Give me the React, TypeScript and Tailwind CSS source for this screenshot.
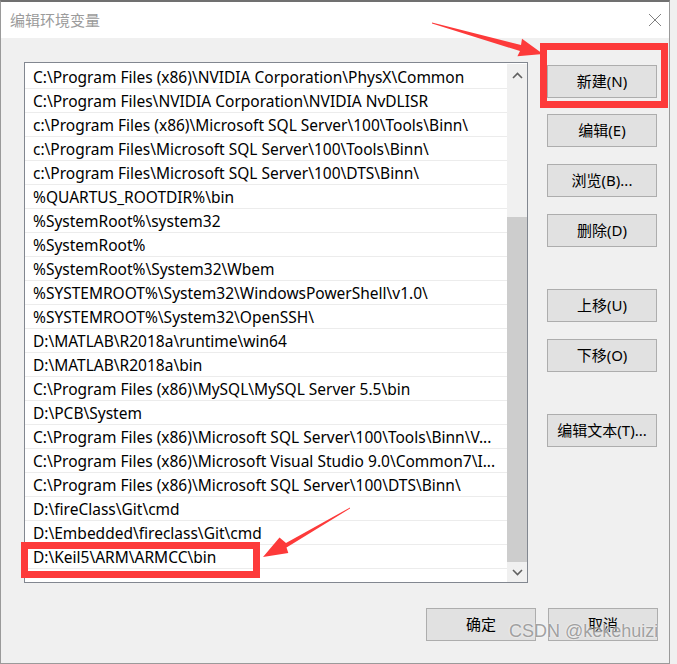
import React from 'react'

const paths = [
  'C:\\Program Files (x86)\\NVIDIA Corporation\\PhysX\\Common',
  'C:\\Program Files\\NVIDIA Corporation\\NVIDIA NvDLISR',
  'c:\\Program Files (x86)\\Microsoft SQL Server\\100\\Tools\\Binn\\',
  'c:\\Program Files\\Microsoft SQL Server\\100\\Tools\\Binn\\',
  'c:\\Program Files\\Microsoft SQL Server\\100\\DTS\\Binn\\',
  '%QUARTUS_ROOTDIR%\\bin',
  '%SystemRoot%\\system32',
  '%SystemRoot%',
  '%SystemRoot%\\System32\\Wbem',
  '%SYSTEMROOT%\\System32\\WindowsPowerShell\\v1.0\\',
  '%SYSTEMROOT%\\System32\\OpenSSH\\',
  'D:\\MATLAB\\R2018a\\runtime\\win64',
  'D:\\MATLAB\\R2018a\\bin',
  'C:\\Program Files (x86)\\MySQL\\MySQL Server 5.5\\bin',
  'D:\\PCB\\System',
  'C:\\Program Files (x86)\\Microsoft SQL Server\\100\\Tools\\Binn\\V...',
  'C:\\Program Files (x86)\\Microsoft Visual Studio 9.0\\Common7\\I...',
  'C:\\Program Files (x86)\\Microsoft SQL Server\\100\\DTS\\Binn\\',
  'D:\\fireClass\\Git\\cmd',
  'D:\\Embedded\\fireclass\\Git\\cmd',
  'D:\\Keil5\\ARM\\ARMCC\\bin',
]

function Btn({ label, className = '' }: { label: string; className?: string }) {
  return (
    <div
      className={`w-[110px] h-[33px] flex items-center justify-center bg-[#e1e1e1] border border-[#adadad] text-[15px] text-black ${className}`}
    >
      {label}
    </div>
  )
}

function ScrollBar() {
  return (
    <div className="w-[20px] flex flex-col bg-[#f0f0f0]">
      <div className="h-[22px] flex items-center justify-center">
        <svg width="11" height="7" viewBox="0 0 11 7">
          <polyline points="1,6 5.5,1.5 10,6" fill="none" stroke="#606060" strokeWidth="1.6" />
        </svg>
      </div>
      <div className="flex-1 flex flex-col">
        <div className="h-[131px]" />
        <div className="flex-1 bg-[#cdcdcd]" />
      </div>
      <div className="h-[20px] flex items-center justify-center">
        <svg width="11" height="7" viewBox="0 0 11 7">
          <polyline points="1,1 5.5,5.5 10,1" fill="none" stroke="#606060" strokeWidth="1.6" />
        </svg>
      </div>
    </div>
  )
}

export default function App() {
  return (
    <div className="relative w-[677px] h-[664px] bg-[#f0f0f0] font-['Noto_Sans','Noto_Sans_CJK_SC',sans-serif] overflow-hidden">
      <div className="w-[670px] h-[664px] flex flex-col border border-[#9a9a9a] border-t-[#707070] border-t-2">
        {/* title bar */}
        <div className="h-[36px] bg-white flex items-center justify-between pl-[9px] pr-[7px]">
          <span className="text-[15px] text-[#9b9b9b]">编辑环境变量</span>
          <svg width="14" height="14" viewBox="0 0 14 14">
            <line x1="1" y1="1" x2="13" y2="13" stroke="#808080" strokeWidth="1" />
            <line x1="13" y1="1" x2="1" y2="13" stroke="#808080" strokeWidth="1" />
          </svg>
        </div>

        {/* body */}
        <div className="flex-1 flex flex-col pl-[23px] pt-[24px]">
          <div className="flex gap-[19px]">
            <div className="w-[504px] h-[521px] border border-[#828790] bg-white flex pt-[1px]">
              <div className="flex-1 flex flex-col pt-[1px]">
                {paths.map((p) => (
                  <div
                    key={p}
                    className="h-[24px] shrink-0 flex items-center pl-[8px] pt-[2px] border-b border-[#ececec] text-[15.5px] text-black whitespace-nowrap"
                  >
                    {p}
                  </div>
                ))}
              </div>
              <ScrollBar />
            </div>

            <div className="flex flex-col pt-[3px]">
              <Btn label="新建(N)" />
              <Btn label="编辑(E)" className="mt-[16px]" />
              <Btn label="浏览(B)..." className="mt-[17px]" />
              <Btn label="删除(D)" className="mt-[17px]" />
              <Btn label="上移(U)" className="mt-[42px]" />
              <Btn label="下移(O)" className="mt-[17px]" />
              <Btn label="编辑文本(T)..." className="mt-[42px]" />
            </div>
          </div>

          <div className="flex justify-end gap-[12px] pr-[11px] mt-[25px]">
            <Btn label="确定" />
            <Btn label="取消" />
          </div>
        </div>
      </div>

      {/* annotations */}
      <svg className="absolute inset-0 pointer-events-none" width="677" height="664" viewBox="0 0 677 664">
        <rect x="543.5" y="46.5" width="121" height="58" fill="none" stroke="#fd3a3a" strokeWidth="7" />
        <rect x="24.5" y="545.5" width="232" height="29" fill="none" stroke="#fd3a3a" strokeWidth="7" />
        <polygon
          points="432,22.5 521,45 522,38.8 543,54 517.4,56.2 520,51 432,23.5"
          fill="#fd3a3a"
        />
        <polygon
          points="350,507.5 286,543 279.5,537.4 263,557 288.3,553 286.5,547.5 350,508.5"
          fill="#fd3a3a"
        />
      </svg>

      <div className="absolute left-[509px] top-[618px] text-[18px] text-[#8a8a8a]/80 [text-shadow:0_0_2px_white] font-['Liberation_Sans',sans-serif]">
        CSDN @kekehuizi
      </div>
    </div>
  )
}
